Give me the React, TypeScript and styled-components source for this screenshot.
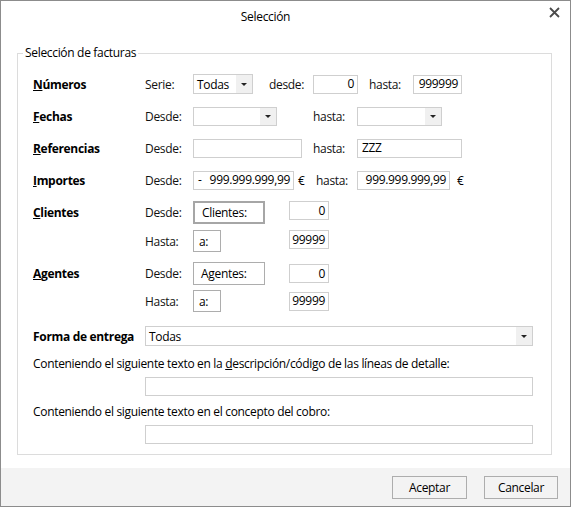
import React from 'react';
import styled, { createGlobalStyle } from 'styled-components';

const Global = createGlobalStyle`
  html, body { margin: 0; padding: 0; background: #fff; }
  body {
    font-family: "Open Sans", "Noto Sans", "Liberation Sans", sans-serif;
    font-size: 12px;
    letter-spacing: -0.32px;
    color: #111;
  }
  * { box-sizing: border-box; }
`;

const Window = styled.div`
  width: 571px;
  height: 507px;
  border: 1px solid #8c8c8c;
  background: #fff;
  display: flex;
  flex-direction: column;
`;

const TitleBar = styled.div`
  height: 31px;
  display: flex;
  align-items: flex-start;
`;

const Title = styled.div`
  flex: 1;
  text-align: center;
  line-height: 31px;
  font-size: 12px;
  color: #000;
`;

const CloseBtn = styled.div`
  width: 40px;
  display: flex;
  justify-content: flex-end;
  padding: 6px 10px 0 0;
`;

const Body = styled.div`
  flex: 1;
  padding: 13px 18px 0 16px;
`;

const Group = styled.fieldset`
  margin: 0;
  padding: 0;
  border: 1px solid #dcdcdc;
  min-width: 0;
`;

const Legend = styled.legend`
  margin-left: 5px;
  padding: 0 2px;
  line-height: 16px;
  color: #000;
`;

const Content = styled.div`
  padding: 7px 15px 10px 15px;
  display: flex;
  flex-direction: column;
`;

const Row = styled.div<{ $h: number; $mt?: number }>`
  display: flex;
  align-items: center;
  height: ${(p) => p.$h}px;
  margin-top: ${(p) => p.$mt || 0}px;
`;

const MainLabel = styled.div<{ $w?: number }>`
  width: ${(p) => p.$w ?? 112}px;
  flex: none;
  font-weight: 700;
  color: #000;
`;

const Lbl = styled.div<{ $w: number; $ml?: number }>`
  width: ${(p) => p.$w}px;
  margin-left: ${(p) => p.$ml || 0}px;
  flex: none;
  white-space: nowrap;
`;

const Field = styled.div<{ $w: number; $h?: number; $ml?: number; $right?: boolean; $self?: string }>`
  width: ${(p) => p.$w}px;
  height: ${(p) => p.$h ?? 19}px;
  margin-left: ${(p) => p.$ml || 0}px;
  flex: none;
  border: 1px solid #cfcfcf;
  background: #fff;
  display: flex;
  align-items: center;
  justify-content: ${(p) => (p.$right ? 'flex-end' : 'space-between')};
  padding: 0 3px 0 4px;
  line-height: 1;
  align-self: ${(p) => p.$self || 'auto'};
  white-space: nowrap;
  color: #000;
`;

const SelectBox = styled.div<{ $w: number; $h?: number; $ml?: number }>`
  width: ${(p) => p.$w}px;
  height: ${(p) => p.$h ?? 20}px;
  margin-left: ${(p) => p.$ml || 0}px;
  flex: none;
  border: 1px solid #cfcfcf;
  background: #fff;
  display: flex;
  align-items: stretch;
`;

const SelectValue = styled.div`
  flex: 1;
  display: flex;
  align-items: center;
  padding-left: 3px;
  color: #000;
`;

const SelectArrow = styled.div`
  width: 16px;
  background: #f0f0f0;
  display: flex;
  align-items: center;
  justify-content: center;
`;

const Tri = styled.span`
  width: 0;
  height: 0;
  border-left: 3px solid transparent;
  border-right: 3px solid transparent;
  border-top: 3px solid #222;
`;

const PushBox = styled.div<{ $w: number; $h: number; $strong?: boolean; $pl?: number }>`
  width: ${(p) => p.$w}px;
  height: ${(p) => p.$h}px;
  flex: none;
  border: ${(p) => (p.$strong ? '2px solid #a6a6a6' : '1px solid #adadad')};
  background: #fff;
  display: flex;
  align-items: center;
  padding-left: ${(p) => p.$pl ?? 7}px;
  color: #000;
`;

const Euro = styled.div<{ $w: number; $ml: number }>`
  width: ${(p) => p.$w}px;
  margin-left: ${(p) => p.$ml}px;
  flex: none;
  color: #000;
`;

const Text = styled.div<{ $mt: number }>`
  margin-top: ${(p) => p.$mt}px;
  line-height: 16px;
  color: #000;
  white-space: nowrap;
`;

const WideField = styled.div<{ $mt: number }>`
  margin-top: ${(p) => p.$mt}px;
  margin-left: 112px;
  width: 388px;
  height: 19px;
  border: 1px solid #cfcfcf;
  background: #fff;
`;

const Footer = styled.div`
  height: 38px;
  background: #f3f3f3;
  display: flex;
  justify-content: flex-end;
  align-items: flex-start;
  gap: 17px;
  padding: 8px 12px 0 0;
`;

const Button = styled.button<{ $w: number }>`
  width: ${(p) => p.$w}px;
  height: 23px;
  border: 1px solid #adadad;
  background: #f3f3f3;
  font-family: inherit;
  font-size: 12px;
  letter-spacing: inherit;
  color: #000;
  padding: 0;
`;

const U = styled.span`
  text-decoration: underline;
`;

const Select: React.FC<{ w: number; h?: number; ml?: number; value?: string }> = ({ w, h, ml, value }) => (
  <SelectBox $w={w} $h={h} $ml={ml}>
    <SelectValue>{value}</SelectValue>
    <SelectArrow>
      <Tri />
    </SelectArrow>
  </SelectBox>
);

export default function App() {
  return (
    <>
      <Global />
      <Window>
        <TitleBar>
          <Title>Selección</Title>
          <CloseBtn>
            <svg width="11" height="11" viewBox="0 0 11 11">
              <path d="M1 1 L10 10 M10 1 L1 10" stroke="#4a4a4a" strokeWidth="1.8" fill="none" />
            </svg>
          </CloseBtn>
        </TitleBar>
        <Body>
          <Group>
            <Legend>Selección de facturas</Legend>
            <Content>
              <Row $h={32}>
                <MainLabel><U>N</U>úmeros</MainLabel>
                <Lbl $w={48}>Serie:</Lbl>
                <Select w={60} value="Todas" />
                <Lbl $w={44} $ml={16}>desde:</Lbl>
                <Field $w={45} $right>0</Field>
                <Lbl $w={44} $ml={11}>hasta:</Lbl>
                <Field $w={49} $right>999999</Field>
              </Row>
              <Row $h={32}>
                <MainLabel><U>F</U>echas</MainLabel>
                <Lbl $w={48}>Desde:</Lbl>
                <Select w={84} h={19} />
                <Lbl $w={44} $ml={36}>hasta:</Lbl>
                <Select w={85} h={19} />
              </Row>
              <Row $h={32}>
                <MainLabel><U>R</U>eferencias</MainLabel>
                <Lbl $w={48}>Desde:</Lbl>
                <Field $w={109} />
                <Lbl $w={44} $ml={11}>hasta:</Lbl>
                <Field $w={105}>ZZZ</Field>
              </Row>
              <Row $h={32}>
                <MainLabel><U>I</U>mportes</MainLabel>
                <Lbl $w={48}>Desde:</Lbl>
                <Field $w={101}>
                  <span>-</span>
                  <span>999.999.999,99</span>
                </Field>
                <Euro $w={18} $ml={4}>€</Euro>
                <Lbl $w={41}>hasta:</Lbl>
                <Field $w={93} $right>999.999.999,99</Field>
                <Euro $w={12} $ml={7}>€</Euro>
              </Row>

              <Row $h={23} $mt={5}>
                <MainLabel><U>C</U>lientes</MainLabel>
                <Lbl $w={48}>Desde:</Lbl>
                <PushBox $w={72} $h={23} $strong $pl={7}>Clientes:</PushBox>
                <Field $w={40} $ml={24} $right $self="flex-start">0</Field>
              </Row>
              <Row $h={22} $mt={6}>
                <MainLabel />
                <Lbl $w={48}>Hasta:</Lbl>
                <PushBox $w={28} $h={22} $pl={5}>a:</PushBox>
                <Field $w={40} $ml={68} $right $self="flex-start">99999</Field>
              </Row>

              <Row $h={23} $mt={10}>
                <MainLabel><U>A</U>gentes</MainLabel>
                <Lbl $w={48}>Desde:</Lbl>
                <PushBox $w={72} $h={23} $pl={7}>Agentes:</PushBox>
                <Field $w={40} $ml={24} $right>0</Field>
              </Row>
              <Row $h={22} $mt={5}>
                <MainLabel />
                <Lbl $w={48}>Hasta:</Lbl>
                <PushBox $w={28} $h={22} $pl={5}>a:</PushBox>
                <Field $w={40} $ml={68} $right>99999</Field>
              </Row>

              <Row $h={20} $mt={14}>
                <MainLabel>Forma de entrega</MainLabel>
                <Select w={388} value="Todas" />
              </Row>

              <Text $mt={10}>
                Conteniendo el siguiente texto en la <U>d</U>escripción/código de las líneas de detalle:
              </Text>
              <WideField $mt={5} />
              <Text $mt={8}>Conteniendo el siguiente texto en el concepto del cobro:</Text>
              <WideField $mt={5} />
            </Content>
          </Group>
        </Body>
        <Footer>
          <Button $w={75}>Aceptar</Button>
          <Button $w={74}>Cancelar</Button>
        </Footer>
      </Window>
    </>
  );
}
